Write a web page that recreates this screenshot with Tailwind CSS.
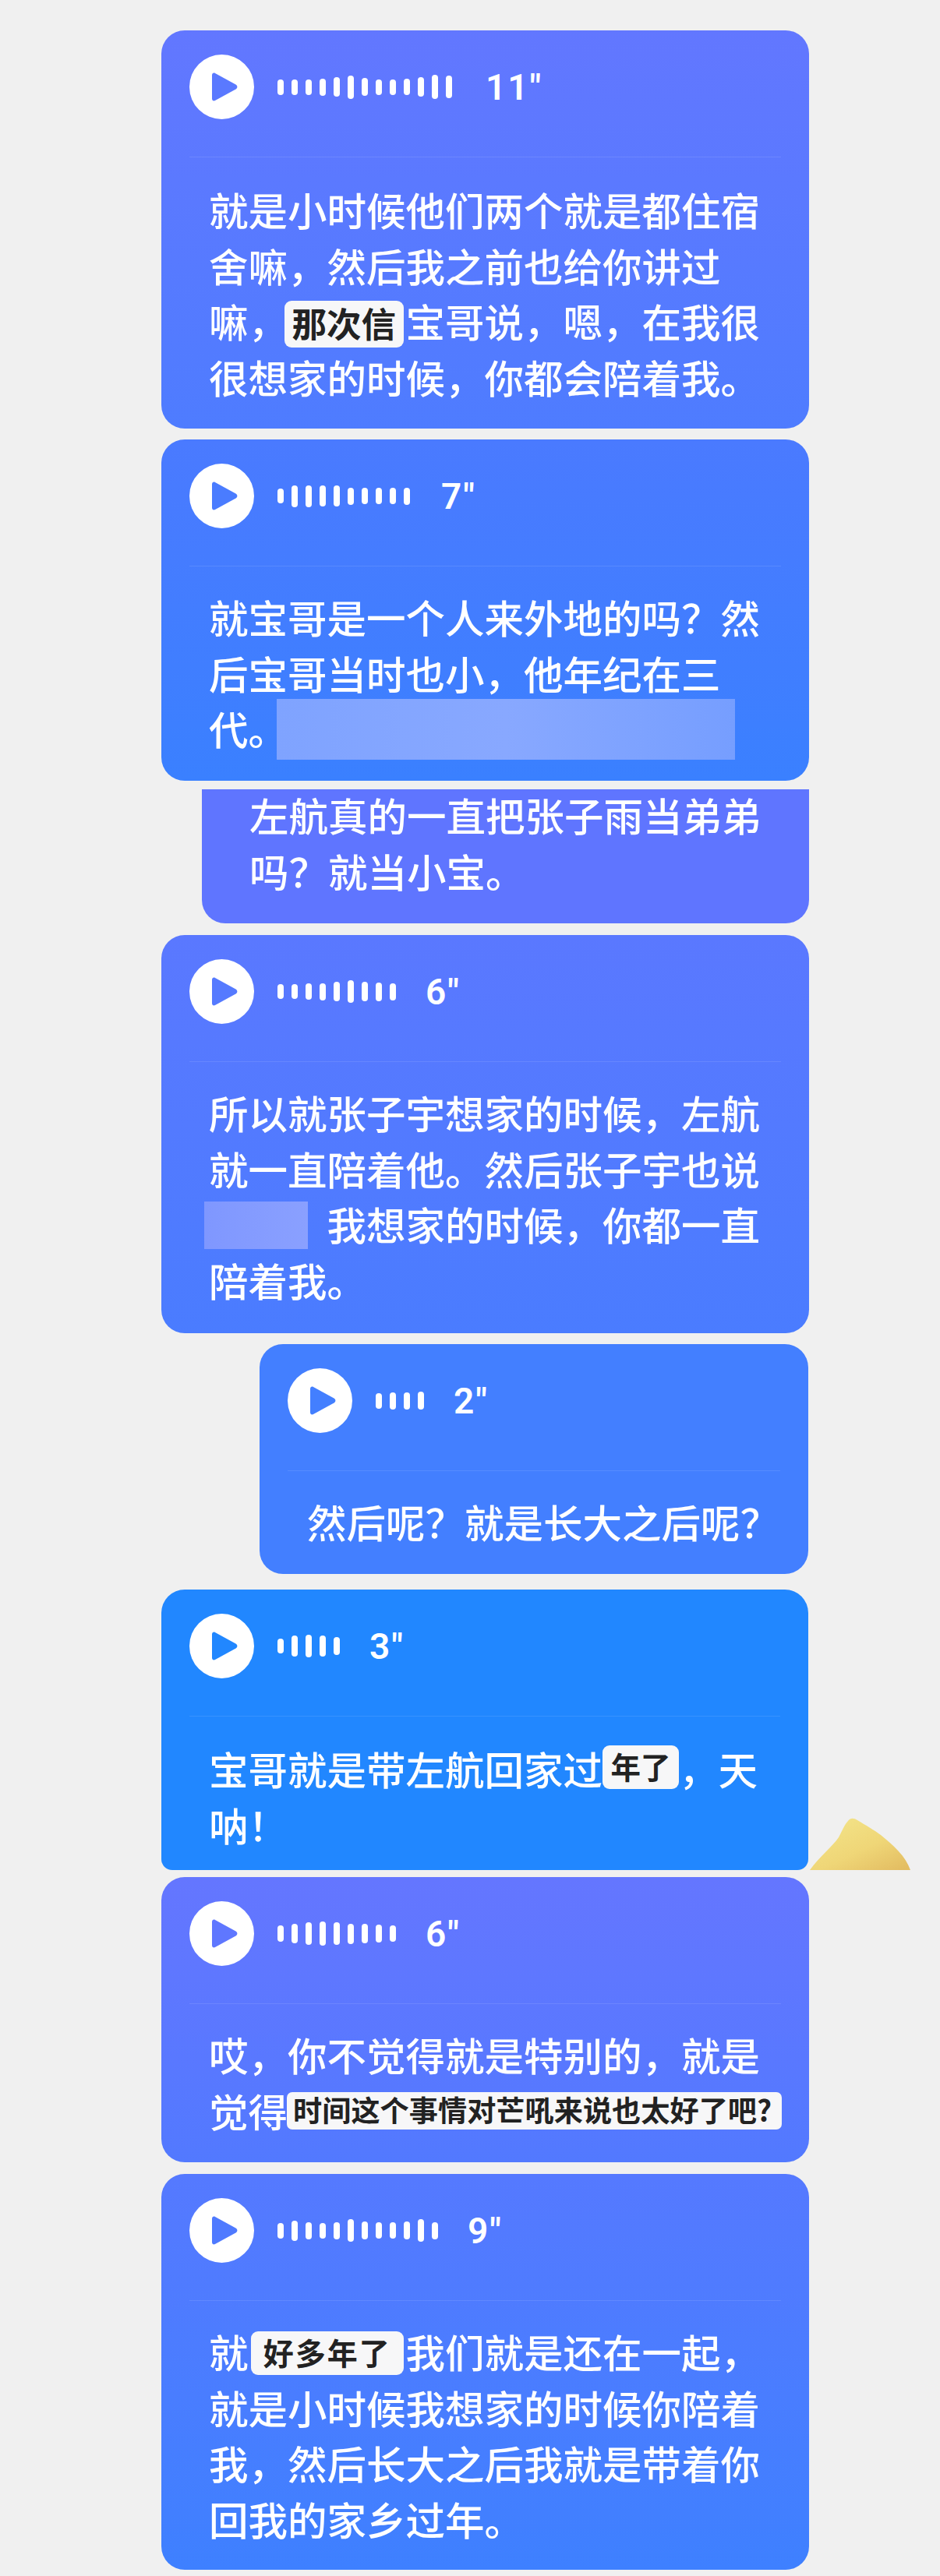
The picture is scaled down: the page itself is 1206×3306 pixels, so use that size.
<!doctype html>
<html lang="zh-CN"><head><meta charset="utf-8">
<script src="https://cdn.jsdelivr.net/npm/@tailwindcss/browser@4"></script>
</head>
<body class="m-0">
<main class="relative w-[1206px] h-[3306px] overflow-hidden bg-[#f0f0f0] font-['Noto_Sans_CJK_SC','Noto_Sans',sans-serif] font-medium text-white text-[50.5px] leading-[71.5px]">

<!-- yellow shape -->
<svg class="absolute left-[1038px] top-[2332px]" width="132" height="68" viewBox="0 0 132 68">
  <defs><linearGradient id="y" x1="0.1" y1="0.1" x2="0.9" y2="1"><stop offset="0" stop-color="#f3e388"/><stop offset="0.55" stop-color="#efd677"/><stop offset="1" stop-color="#e3bd62"/></linearGradient></defs>
  <path d="M1 68 C14 50 30 38 38 26 C42 18 46 9 50 5 C53 1 57 1 62 4 C72 10 84 17 92 23 C108 36 124 50 130 68 Z" fill="url(#y)"/>
</svg>

<!-- card 1 -->
<section class="absolute left-[207px] top-[39px] w-[831px] h-[511px] rounded-[30px] bg-gradient-to-b from-[#6277ff] to-[#4e7cff] px-[36px] pt-[31px]">
  <div class="flex items-center h-[83px]">
    <span class="w-[83px] h-[83px] rounded-full bg-white flex items-center justify-center"><svg width="83" height="83" viewBox="0 0 83 83"><path d="M29 26.5 C29 24 31 23 33 24 L59.5 38.5 C62 40 62 43 59.5 44.5 L33 59 C31 60 29 59 29 56.5 Z" fill="#5a79ff"/></svg></span>
    <div class="ml-[30px] flex items-center gap-[10px]">
      <i class="w-[8px] rounded-full bg-white h-[20px]"></i><i class="w-[8px] rounded-full bg-white h-[20px]"></i><i class="w-[8px] rounded-full bg-white h-[20px]"></i><i class="w-[8px] rounded-full bg-white h-[22px]"></i><i class="w-[8px] rounded-full bg-white h-[25px]"></i><i class="w-[8px] rounded-full bg-white h-[30px]"></i><i class="w-[8px] rounded-full bg-white h-[23px]"></i><i class="w-[8px] rounded-full bg-white h-[20px]"></i><i class="w-[8px] rounded-full bg-white h-[20px]"></i><i class="w-[8px] rounded-full bg-white h-[21px]"></i><i class="w-[8px] rounded-full bg-white h-[25px]"></i><i class="w-[8px] rounded-full bg-white h-[31px]"></i><i class="w-[8px] rounded-full bg-white h-[29px]"></i>
    </div>
    <span class="ml-[43px] font-['Roboto',sans-serif] font-semibold text-[46px] tracking-[2px] leading-[50px]">11"</span>
  </div>
  <div class="mt-[48px] h-px bg-white/10"></div>
  <div class="mt-[31px] pl-[25px] whitespace-nowrap">
    <p class="h-[71.5px]">就是小时候他们两个就是都住宿</p>
    <p class="h-[71.5px]">舍嘛，然后我之前也给你讲过</p>
    <p class="h-[71.5px]">嘛，<span class="relative -top-[3px] inline-block align-middle ml-[-4px] mr-[3px] w-[152.5px] h-[60px] rounded-[9px] bg-[#f7f7f8] text-[#222] text-[44.5px] leading-[56px] font-bold text-center">那次信</span>宝哥说，嗯，在我很</p>
    <p class="h-[71.5px]">很想家的时候，你都会陪着我。</p>
  </div>
</section>

<!-- card 2 -->
<section class="absolute left-[207px] top-[564px] w-[831px] h-[438px] rounded-[30px] bg-gradient-to-b from-[#4a7aff] to-[#3a80ff] px-[36px] pt-[31px]">
  <div class="flex items-center h-[83px]">
    <span class="w-[83px] h-[83px] rounded-full bg-white flex items-center justify-center"><svg width="83" height="83" viewBox="0 0 83 83"><path d="M29 26.5 C29 24 31 23 33 24 L59.5 38.5 C62 40 62 43 59.5 44.5 L33 59 C31 60 29 59 29 56.5 Z" fill="#4a7cff"/></svg></span>
    <div class="ml-[30px] flex items-center gap-[10px]">
      <i class="w-[8px] rounded-full bg-white h-[19px]"></i><i class="w-[8px] rounded-full bg-white h-[28px]"></i><i class="w-[8px] rounded-full bg-white h-[28px]"></i><i class="w-[8px] rounded-full bg-white h-[27px]"></i><i class="w-[8px] rounded-full bg-white h-[27px]"></i><i class="w-[8px] rounded-full bg-white h-[22px]"></i><i class="w-[8px] rounded-full bg-white h-[21px]"></i><i class="w-[8px] rounded-full bg-white h-[21px]"></i><i class="w-[8px] rounded-full bg-white h-[21px]"></i><i class="w-[8px] rounded-full bg-white h-[22px]"></i>
    </div>
    <span class="ml-[40px] font-['Roboto',sans-serif] font-semibold text-[46px] tracking-[2px] leading-[50px]">7"</span>
  </div>
  <div class="mt-[48px] h-px bg-white/10"></div>
  <div class="relative mt-[29px] pl-[25px] whitespace-nowrap">
    <p class="h-[71.5px]">就宝哥是一个人来外地的吗？然</p>
    <p class="h-[71.5px]">后宝哥当时也小，他年纪在三</p>
    <p class="h-[71.5px]">代。</p>
    <div class="absolute left-[112px] top-[141px] w-[588px] h-[78px] bg-gradient-to-r from-[#7fa3ff] via-[#88a8ff] to-[#769eff]"></div>
  </div>
</section>

<!-- card 3 -->
<section class="absolute left-[259px] top-[1013px] w-[779px] h-[172px] rounded-b-[30px] bg-[#5f75ff] pl-[61px] whitespace-nowrap">
  <p class="h-[71.5px] -mt-[3px]">左航真的一直把张子雨当弟弟</p>
  <p class="h-[71.5px]">吗？就当小宝。</p>
</section>

<!-- card 4 -->
<section class="absolute left-[207px] top-[1200px] w-[831px] h-[511px] rounded-[30px] bg-gradient-to-b from-[#5a78ff] to-[#4a7cff] px-[36px] pt-[31px]">
  <div class="flex items-center h-[83px]">
    <span class="w-[83px] h-[83px] rounded-full bg-white flex items-center justify-center"><svg width="83" height="83" viewBox="0 0 83 83"><path d="M29 26.5 C29 24 31 23 33 24 L59.5 38.5 C62 40 62 43 59.5 44.5 L33 59 C31 60 29 59 29 56.5 Z" fill="#557aff"/></svg></span>
    <div class="ml-[30px] flex items-center gap-[10px]">
      <i class="w-[8px] rounded-full bg-white h-[19px]"></i><i class="w-[8px] rounded-full bg-white h-[19px]"></i><i class="w-[8px] rounded-full bg-white h-[21px]"></i><i class="w-[8px] rounded-full bg-white h-[22px]"></i><i class="w-[8px] rounded-full bg-white h-[25px]"></i><i class="w-[8px] rounded-full bg-white h-[29px]"></i><i class="w-[8px] rounded-full bg-white h-[25px]"></i><i class="w-[8px] rounded-full bg-white h-[24px]"></i><i class="w-[8px] rounded-full bg-white h-[22px]"></i>
    </div>
    <span class="ml-[38px] font-['Roboto',sans-serif] font-semibold text-[46px] tracking-[2px] leading-[50px]">6"</span>
  </div>
  <div class="mt-[48px] h-px bg-white/10"></div>
  <div class="relative mt-[29px] pl-[25px] whitespace-nowrap">
    <p class="h-[71.5px]">所以就张子宇想家的时候，左航</p>
    <p class="h-[71.5px]">就一直陪着他。然后张子宇也说</p>
    <p class="h-[71.5px] pl-[151.5px]">我想家的时候，你都一直</p>
    <p class="h-[71.5px]">陪着我。</p>
    <div class="absolute left-[19px] top-[150px] w-[133px] h-[61px] bg-gradient-to-r from-[#7f97ff] to-[#8aa0ff]"></div>
  </div>
</section>

<!-- card 5 -->
<section class="absolute left-[333px] top-[1725px] w-[704px] h-[295px] rounded-[30px] bg-[#437fff] px-[36px] pt-[31px]">
  <div class="flex items-center h-[83px]">
    <span class="w-[83px] h-[83px] rounded-full bg-white flex items-center justify-center"><svg width="83" height="83" viewBox="0 0 83 83"><path d="M29 26.5 C29 24 31 23 33 24 L59.5 38.5 C62 40 62 43 59.5 44.5 L33 59 C31 60 29 59 29 56.5 Z" fill="#437fff"/></svg></span>
    <div class="ml-[30px] flex items-center gap-[10px]">
      <i class="w-[8px] rounded-full bg-white h-[20px]"></i><i class="w-[8px] rounded-full bg-white h-[22px]"></i><i class="w-[8px] rounded-full bg-white h-[22px]"></i><i class="w-[8px] rounded-full bg-white h-[23px]"></i>
    </div>
    <span class="ml-[38px] font-['Roboto',sans-serif] font-semibold text-[46px] tracking-[2px] leading-[50px]">2"</span>
  </div>
  <div class="mt-[48px] h-px bg-white/10"></div>
  <p class="mt-[29px] pl-[25px] h-[71.5px] whitespace-nowrap">然后呢？就是长大之后呢？</p>
</section>

<!-- card 6 -->
<section class="absolute left-[207px] top-[2040px] w-[830px] h-[360px] rounded-t-[30px] rounded-b-[14px] bg-[#2187ff] px-[36px] pt-[31px]">
  <div class="flex items-center h-[83px]">
    <span class="w-[83px] h-[83px] rounded-full bg-white flex items-center justify-center"><svg width="83" height="83" viewBox="0 0 83 83"><path d="M29 26.5 C29 24 31 23 33 24 L59.5 38.5 C62 40 62 43 59.5 44.5 L33 59 C31 60 29 59 29 56.5 Z" fill="#2187ff"/></svg></span>
    <div class="ml-[30px] flex items-center gap-[10px]">
      <i class="w-[8px] rounded-full bg-white h-[19px]"></i><i class="w-[8px] rounded-full bg-white h-[27px]"></i><i class="w-[8px] rounded-full bg-white h-[29px]"></i><i class="w-[8px] rounded-full bg-white h-[27px]"></i><i class="w-[8px] rounded-full bg-white h-[23px]"></i>
    </div>
    <span class="ml-[38px] font-['Roboto',sans-serif] font-semibold text-[46px] tracking-[2px] leading-[50px]">3"</span>
  </div>
  <div class="mt-[48px] h-px bg-white/10"></div>
  <div class="mt-[31px] pl-[25px] whitespace-nowrap">
    <p class="h-[71.5px]">宝哥就是带左航回家过<span class="relative -top-[9px] inline-block align-middle w-[98px] h-[56px] rounded-[9px] bg-[#f7f7f8] text-[#222] text-[38.5px] leading-[52px] font-bold text-center">年了</span>，天</p>
    <p class="h-[71.5px]">呐！</p>
  </div>
</section>

<!-- card 7 -->
<section class="absolute left-[207px] top-[2409px] w-[831px] h-[366px] rounded-[30px] bg-gradient-to-b from-[#6476ff] to-[#5279ff] px-[36px] pt-[31px]">
  <div class="flex items-center h-[83px]">
    <span class="w-[83px] h-[83px] rounded-full bg-white flex items-center justify-center"><svg width="83" height="83" viewBox="0 0 83 83"><path d="M29 26.5 C29 24 31 23 33 24 L59.5 38.5 C62 40 62 43 59.5 44.5 L33 59 C31 60 29 59 29 56.5 Z" fill="#5f77ff"/></svg></span>
    <div class="ml-[30px] flex items-center gap-[10px]">
      <i class="w-[8px] rounded-full bg-white h-[21px]"></i><i class="w-[8px] rounded-full bg-white h-[25px]"></i><i class="w-[8px] rounded-full bg-white h-[29px]"></i><i class="w-[8px] rounded-full bg-white h-[31px]"></i><i class="w-[8px] rounded-full bg-white h-[29px]"></i><i class="w-[8px] rounded-full bg-white h-[26px]"></i><i class="w-[8px] rounded-full bg-white h-[25px]"></i><i class="w-[8px] rounded-full bg-white h-[23px]"></i><i class="w-[8px] rounded-full bg-white h-[21px]"></i>
    </div>
    <span class="ml-[38px] font-['Roboto',sans-serif] font-semibold text-[46px] tracking-[2px] leading-[50px]">6"</span>
  </div>
  <div class="mt-[48px] h-px bg-white/10"></div>
  <div class="mt-[29px] pl-[25px] whitespace-nowrap">
    <p class="h-[71.5px]">哎，你不觉得就是特别的，就是</p>
    <p class="h-[71.5px]">觉得<span class="relative -top-[7px] inline-block align-middle ml-[-1px] w-[635px] h-[48px] rounded-[7px] bg-[#f7f7f8] pl-[8px] text-[#222] text-[37.2px] leading-[44px] font-bold text-left">时间这个事情对芒吼来说也太好了吧?</span></p>
  </div>
</section>

<!-- card 8 -->
<section class="absolute left-[207px] top-[2790px] w-[831px] h-[508px] rounded-[30px] bg-gradient-to-b from-[#5579ff] to-[#3e80ff] px-[36px] pt-[31px]">
  <div class="flex items-center h-[83px]">
    <span class="w-[83px] h-[83px] rounded-full bg-white flex items-center justify-center"><svg width="83" height="83" viewBox="0 0 83 83"><path d="M29 26.5 C29 24 31 23 33 24 L59.5 38.5 C62 40 62 43 59.5 44.5 L33 59 C31 60 29 59 29 56.5 Z" fill="#4f7aff"/></svg></span>
    <div class="ml-[30px] flex items-center gap-[10px]">
      <i class="w-[8px] rounded-full bg-white h-[20px]"></i><i class="w-[8px] rounded-full bg-white h-[26px]"></i><i class="w-[8px] rounded-full bg-white h-[22px]"></i><i class="w-[8px] rounded-full bg-white h-[20px]"></i><i class="w-[8px] rounded-full bg-white h-[22px]"></i><i class="w-[8px] rounded-full bg-white h-[29px]"></i><i class="w-[8px] rounded-full bg-white h-[23px]"></i><i class="w-[8px] rounded-full bg-white h-[21px]"></i><i class="w-[8px] rounded-full bg-white h-[21px]"></i><i class="w-[8px] rounded-full bg-white h-[23px]"></i><i class="w-[8px] rounded-full bg-white h-[29px]"></i><i class="w-[8px] rounded-full bg-white h-[22px]"></i>
    </div>
    <span class="ml-[38px] font-['Roboto',sans-serif] font-semibold text-[46px] tracking-[2px] leading-[50px]">9"</span>
  </div>
  <div class="mt-[48px] h-px bg-white/10"></div>
  <div class="mt-[29px] pl-[25px] whitespace-nowrap">
    <p class="h-[71.5px]">就<span class="relative -top-[5px] inline-block align-middle ml-[3.5px] mr-[3px] w-[195.5px] h-[56px] rounded-[9px] bg-[#f7f7f8] text-[#222] text-[39px] tracking-[2px] leading-[52px] font-bold text-center">好多年了</span>我们就是还在一起，</p>
    <p class="h-[71.5px]">就是小时候我想家的时候你陪着</p>
    <p class="h-[71.5px]">我，然后长大之后我就是带着你</p>
    <p class="h-[71.5px]">回我的家乡过年。</p>
  </div>
</section>
</main>
</body></html>
